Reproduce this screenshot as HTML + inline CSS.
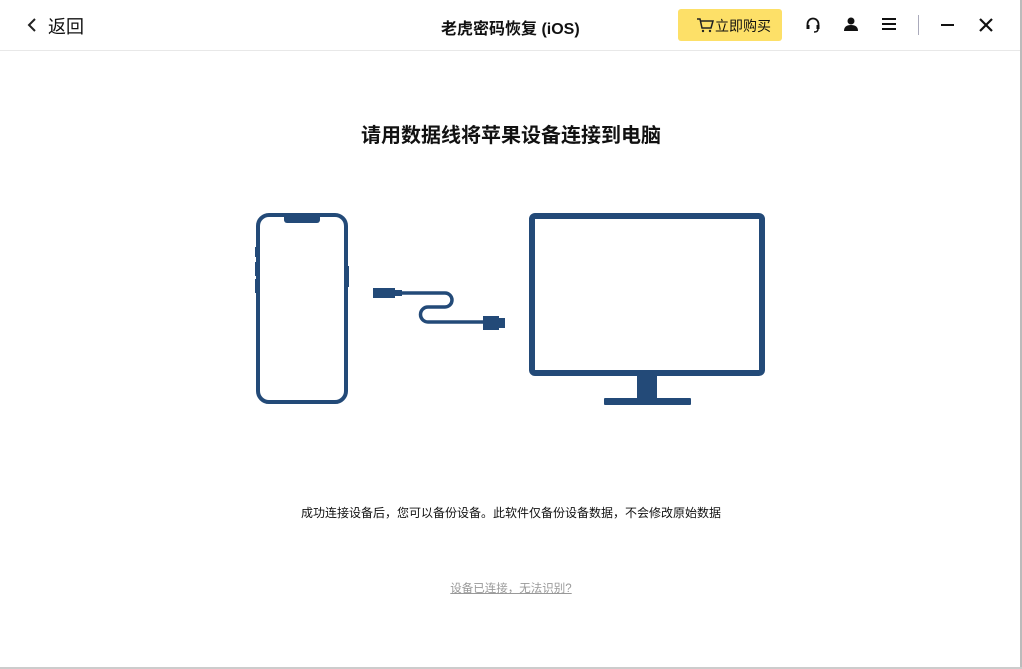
<!DOCTYPE html>
<html><head><meta charset="utf-8"><style>
body{margin:0;width:1022px;height:669px;background:#fff;font-family:"Liberation Sans","Noto Sans CJK SC",sans-serif;overflow:hidden;position:relative}
.hdr{position:absolute;left:0;top:0;width:1022px;height:50px;border-bottom:1px solid #e8e8e8}
.t{position:absolute;white-space:nowrap}
</style></head><body>
<div class="hdr"></div>
<svg class="t" style="left:26px;top:17px" width="12" height="16"><path d="M9 2L3 8L9 14" stroke="#222" stroke-width="2" fill="none"/></svg>
<div class="t" style="left:48px;top:13px;font-size:18px;color:#111">返回</div>
<div class="t" style="left:441px;top:15px;font-size:16px;font-weight:bold;color:#111">老虎密码恢复 (iOS)</div>
<div class="t" style="left:678px;top:9px;width:104px;height:32px;background:#fde068;border-radius:3px"></div>
<svg class="t" style="left:696px;top:17px" width="18" height="16"><path d="M1 2h3l2 9h9l2-7H5" stroke="#222" stroke-width="1.5" fill="none"/><circle cx="7" cy="14" r="1.2" fill="#222"/><circle cx="14" cy="14" r="1.2" fill="#222"/></svg>
<div class="t" style="left:715px;top:16px;font-size:14px;color:#111">立即购买</div>
<svg class="t" style="left:805px;top:16px" width="16" height="18"><path d="M2.5 11V8a5.5 5.5 0 0 1 11 0v3" stroke="#111" stroke-width="1.8" fill="none"/><rect x="1.5" y="9" width="3" height="4" fill="#111"/><rect x="11.5" y="9" width="3" height="4" fill="#111"/><path d="M13 13q0 3-4 3" stroke="#111" stroke-width="1.5" fill="none"/></svg>
<svg class="t" style="left:843px;top:16px" width="16" height="16"><circle cx="8" cy="5" r="3.5" fill="#111"/><path d="M1 15q0-6 7-6t7 6z" fill="#111"/></svg>
<svg class="t" style="left:881px;top:17px" width="16" height="14"><path d="M1 2h14M1 7h14M1 12h14" stroke="#111" stroke-width="2"/></svg>
<div class="t" style="left:918px;top:15px;width:1px;height:20px;background:#aab"></div>
<div class="t" style="left:941px;top:24px;width:13px;height:2px;background:#111"></div>
<svg class="t" style="left:979px;top:18px" width="14" height="14"><path d="M1 1L13 13M13 1L1 13" stroke="#111" stroke-width="2.2"/></svg>
<div class="t" style="left:0;width:1022px;text-align:center;top:119px;font-size:20px;font-weight:bold;color:#111">请用数据线将苹果设备连接到电脑</div>
<svg class="t" style="left:0;top:0" width="1022" height="669">
<g fill="none" stroke="#234a78">
<rect x="258" y="215" width="88" height="187" rx="11" stroke-width="4"/>
<rect x="532" y="216" width="230" height="157" rx="3" stroke-width="6"/>
<path d="M400 293H445a7 7 0 0 1 0 14H428a7.5 7.5 0 0 0 0 15H486" stroke-width="3.5"/>
</g>
<g fill="#234a78">
<path d="M284 214h36v6a3 3 0 0 1-3 3h-30a3 3 0 0 1-3-3z"/>
<rect x="255" y="247" width="3" height="10"/><rect x="255" y="262" width="3" height="14"/><rect x="255" y="279" width="3" height="14"/><rect x="346" y="266" width="3" height="21"/>
<rect x="373" y="288" width="22" height="10"/><rect x="394" y="290" width="8" height="6"/>
<rect x="483" y="316" width="16" height="14"/><rect x="498" y="318" width="7" height="10"/>
<rect x="637" y="374" width="20" height="25"/><rect x="604" y="398" width="87" height="7" rx="1"/>
</g></svg>
<div class="t" style="left:0;width:1022px;text-align:center;top:504px;font-size:12px;color:#111">成功连接设备后，您可以备份设备。此软件仅备份设备数据，不会修改原始数据</div>
<div class="t" style="left:0;width:1022px;text-align:center;top:580px;font-size:11.5px;color:#999;text-decoration:underline">设备已连接，无法识别?</div>
<div class="t" style="left:1020px;top:0;width:2px;height:669px;background:#bbb"></div>
<div class="t" style="left:0;top:667px;width:1022px;height:2px;background:#ccc"></div>
</body></html>
